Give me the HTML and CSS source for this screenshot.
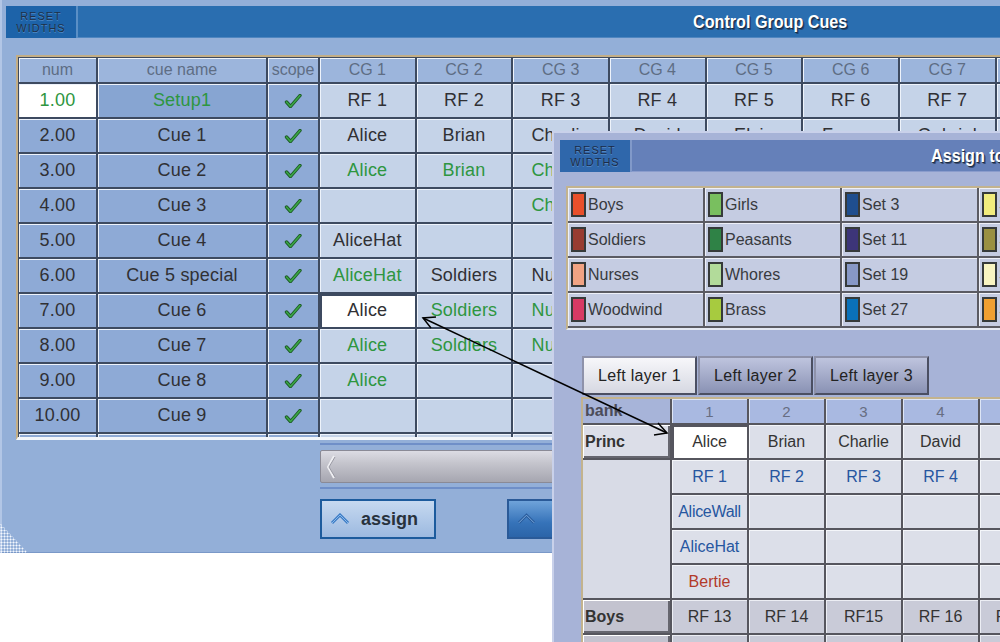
FILE: index.html
```html
<!DOCTYPE html>
<html>
<head>
<meta charset="utf-8">
<link rel="stylesheet" href="styles.css">
</head>
<body>
<div class="desk">
  <section class="win main">
    <header class="titlebar">
      <div class="reset">RESET<br>WIDTHS</div>
      <div class="title"><span>Control Group Cues</span></div>
    </header>
    <div class="cuewrap">
      <div class="cues">
        <div class="c h">num</div><div class="c h">cue name</div><div class="c h">scope</div>
        <div class="c h">CG 1</div><div class="c h">CG 2</div><div class="c h">CG 3</div><div class="c h">CG 4</div><div class="c h">CG 5</div><div class="c h">CG 6</div><div class="c h">CG 7</div><div class="c h">CG 8</div>

        <div class="c w g">1.00</div><div class="c b g dk">Setup1</div><div class="c b ck"><svg width="18" height="14" viewBox="0 0 18 14"><path d="M2.5 8 L6.5 12.5 L16 1.5" fill="none" stroke="#1d5a26" stroke-width="3.4" stroke-linecap="round" stroke-linejoin="round"/><path d="M2.5 8 L6.5 12.5 L16 1.5" fill="none" stroke="#3aa746" stroke-width="1.6" stroke-linecap="round" stroke-linejoin="round"/></svg></div>
        <div class="c l">RF 1</div><div class="c l">RF 2</div><div class="c l">RF 3</div><div class="c l">RF 4</div><div class="c l">RF 5</div><div class="c l">RF 6</div><div class="c l">RF 7</div><div class="c l">RF 8</div>

        <div class="c b">2.00</div><div class="c b">Cue 1</div><div class="c b ck"><svg width="18" height="14" viewBox="0 0 18 14"><path d="M2.5 8 L6.5 12.5 L16 1.5" fill="none" stroke="#1d5a26" stroke-width="3.4" stroke-linecap="round" stroke-linejoin="round"/><path d="M2.5 8 L6.5 12.5 L16 1.5" fill="none" stroke="#3aa746" stroke-width="1.6" stroke-linecap="round" stroke-linejoin="round"/></svg></div>
        <div class="c l">Alice</div><div class="c l">Brian</div><div class="c l">Charlie</div><div class="c l">David</div><div class="c l">Elsie</div><div class="c l">Fergus</div><div class="c l">Gabriel</div><div class="c l">Harry</div>

        <div class="c b">3.00</div><div class="c b">Cue 2</div><div class="c b ck"><svg width="18" height="14" viewBox="0 0 18 14"><path d="M2.5 8 L6.5 12.5 L16 1.5" fill="none" stroke="#1d5a26" stroke-width="3.4" stroke-linecap="round" stroke-linejoin="round"/><path d="M2.5 8 L6.5 12.5 L16 1.5" fill="none" stroke="#3aa746" stroke-width="1.6" stroke-linecap="round" stroke-linejoin="round"/></svg></div>
        <div class="c l g">Alice</div><div class="c l g">Brian</div><div class="c l g">Charlie</div><div class="c l"></div><div class="c l"></div><div class="c l"></div><div class="c l"></div><div class="c l"></div>

        <div class="c b">4.00</div><div class="c b">Cue 3</div><div class="c b ck"><svg width="18" height="14" viewBox="0 0 18 14"><path d="M2.5 8 L6.5 12.5 L16 1.5" fill="none" stroke="#1d5a26" stroke-width="3.4" stroke-linecap="round" stroke-linejoin="round"/><path d="M2.5 8 L6.5 12.5 L16 1.5" fill="none" stroke="#3aa746" stroke-width="1.6" stroke-linecap="round" stroke-linejoin="round"/></svg></div>
        <div class="c l"></div><div class="c l"></div><div class="c l g">Charlie</div><div class="c l"></div><div class="c l"></div><div class="c l"></div><div class="c l"></div><div class="c l"></div>

        <div class="c b">5.00</div><div class="c b">Cue 4</div><div class="c b ck"><svg width="18" height="14" viewBox="0 0 18 14"><path d="M2.5 8 L6.5 12.5 L16 1.5" fill="none" stroke="#1d5a26" stroke-width="3.4" stroke-linecap="round" stroke-linejoin="round"/><path d="M2.5 8 L6.5 12.5 L16 1.5" fill="none" stroke="#3aa746" stroke-width="1.6" stroke-linecap="round" stroke-linejoin="round"/></svg></div>
        <div class="c l">AliceHat</div><div class="c l"></div><div class="c l"></div><div class="c l"></div><div class="c l"></div><div class="c l"></div><div class="c l"></div><div class="c l"></div>

        <div class="c b">6.00</div><div class="c b">Cue 5 special</div><div class="c b ck"><svg width="18" height="14" viewBox="0 0 18 14"><path d="M2.5 8 L6.5 12.5 L16 1.5" fill="none" stroke="#1d5a26" stroke-width="3.4" stroke-linecap="round" stroke-linejoin="round"/><path d="M2.5 8 L6.5 12.5 L16 1.5" fill="none" stroke="#3aa746" stroke-width="1.6" stroke-linecap="round" stroke-linejoin="round"/></svg></div>
        <div class="c l g">AliceHat</div><div class="c l">Soldiers</div><div class="c l">Nurses</div><div class="c l"></div><div class="c l"></div><div class="c l"></div><div class="c l"></div><div class="c l"></div>

        <div class="c b">7.00</div><div class="c b">Cue 6</div><div class="c b ck"><svg width="18" height="14" viewBox="0 0 18 14"><path d="M2.5 8 L6.5 12.5 L16 1.5" fill="none" stroke="#1d5a26" stroke-width="3.4" stroke-linecap="round" stroke-linejoin="round"/><path d="M2.5 8 L6.5 12.5 L16 1.5" fill="none" stroke="#3aa746" stroke-width="1.6" stroke-linecap="round" stroke-linejoin="round"/></svg></div>
        <div class="c sel">Alice</div><div class="c l g">Soldiers</div><div class="c l g">Nurses</div><div class="c l"></div><div class="c l"></div><div class="c l"></div><div class="c l"></div><div class="c l"></div>

        <div class="c b">8.00</div><div class="c b">Cue 7</div><div class="c b ck"><svg width="18" height="14" viewBox="0 0 18 14"><path d="M2.5 8 L6.5 12.5 L16 1.5" fill="none" stroke="#1d5a26" stroke-width="3.4" stroke-linecap="round" stroke-linejoin="round"/><path d="M2.5 8 L6.5 12.5 L16 1.5" fill="none" stroke="#3aa746" stroke-width="1.6" stroke-linecap="round" stroke-linejoin="round"/></svg></div>
        <div class="c l g">Alice</div><div class="c l g">Soldiers</div><div class="c l g">Nurses</div><div class="c l"></div><div class="c l"></div><div class="c l"></div><div class="c l"></div><div class="c l"></div>

        <div class="c b">9.00</div><div class="c b">Cue 8</div><div class="c b ck"><svg width="18" height="14" viewBox="0 0 18 14"><path d="M2.5 8 L6.5 12.5 L16 1.5" fill="none" stroke="#1d5a26" stroke-width="3.4" stroke-linecap="round" stroke-linejoin="round"/><path d="M2.5 8 L6.5 12.5 L16 1.5" fill="none" stroke="#3aa746" stroke-width="1.6" stroke-linecap="round" stroke-linejoin="round"/></svg></div>
        <div class="c l g">Alice</div><div class="c l"></div><div class="c l"></div><div class="c l"></div><div class="c l"></div><div class="c l"></div><div class="c l"></div><div class="c l"></div>

        <div class="c b">10.00</div><div class="c b">Cue 9</div><div class="c b ck"><svg width="18" height="14" viewBox="0 0 18 14"><path d="M2.5 8 L6.5 12.5 L16 1.5" fill="none" stroke="#1d5a26" stroke-width="3.4" stroke-linecap="round" stroke-linejoin="round"/><path d="M2.5 8 L6.5 12.5 L16 1.5" fill="none" stroke="#3aa746" stroke-width="1.6" stroke-linecap="round" stroke-linejoin="round"/></svg></div>
        <div class="c l"></div><div class="c l"></div><div class="c l"></div><div class="c l"></div><div class="c l"></div><div class="c l"></div><div class="c l"></div><div class="c l"></div>

        <div class="c b">11.00</div><div class="c b">Cue 10</div><div class="c b"></div>
        <div class="c l"></div><div class="c l"></div><div class="c l"></div><div class="c l"></div><div class="c l"></div><div class="c l"></div><div class="c l"></div><div class="c l"></div>
      </div>
    </div>
    <div class="scroller">
      <div class="track">
        <svg width="12" height="26" viewBox="0 0 12 26"><polyline points="9,2 3,13 9,24" fill="none" stroke="#eeeef2" stroke-width="2"/><polyline points="10,3 4,13 10,23" fill="none" stroke="#9a9aa4" stroke-width="1"/></svg>
      </div>
    </div>
    <div class="btnrow">
      <div class="btn"><svg width="20" height="12" viewBox="0 0 20 12"><polyline points="2,10 10,2 18,10" fill="none" stroke="#3b7cc6" stroke-width="3"/><polyline points="2,10 10,2 18,10" fill="none" stroke="#8ab8e8" stroke-width="1"/></svg><span>assign</span></div>
      <div class="btn dark"><svg width="20" height="12" viewBox="0 0 20 12"><polyline points="2,10 10,2 18,10" fill="none" stroke="#2a5c9c" stroke-width="3"/><polyline points="2,10 10,2 18,10" fill="none" stroke="#7eaee0" stroke-width="1"/></svg><span>unassign</span></div>
    </div>
    <div class="grip"></div>
  </section>

  <section class="win assignwin">
    <header class="titlebar t2">
      <div class="reset r2">RESET<br>WIDTHS</div>
      <div class="title title2"><span>Assign to Control Group</span></div>
    </header>
    <div class="colwrap">
      <div class="colors">
        <div class="cc"><i style="background:#e9502b"></i>Boys</div>
        <div class="cc"><i style="background:#79bf5f"></i>Girls</div>
        <div class="cc"><i style="background:#1f4e8e"></i>Set 3</div>
        <div class="cc"><i style="background:#f1ec7e"></i>Set 4</div>
        <div class="cc"><i style="background:#983c30"></i>Soldiers</div>
        <div class="cc"><i style="background:#2f8246"></i>Peasants</div>
        <div class="cc"><i style="background:#3d3579"></i>Set 11</div>
        <div class="cc"><i style="background:#9a9042"></i>Set 12</div>
        <div class="cc"><i style="background:#f1a383"></i>Nurses</div>
        <div class="cc"><i style="background:#b2db9a"></i>Whores</div>
        <div class="cc"><i style="background:#8798c6"></i>Set 19</div>
        <div class="cc"><i style="background:#f8f4c2"></i>Set 20</div>
        <div class="cc"><i style="background:#d83a64"></i>Woodwind</div>
        <div class="cc"><i style="background:#a7cb3f"></i>Brass</div>
        <div class="cc"><i style="background:#0a71b9"></i>Set 27</div>
        <div class="cc"><i style="background:#f0a033"></i>Set 28</div>
      </div>
    </div>
    <div class="tabs">
      <div class="tab on">Left layer 1</div>
      <div class="tab">Left layer 2</div>
      <div class="tab">Left layer 3</div>
    </div>
    <div class="bankwrap">
      <div class="bank">
        <div class="k hl">bank</div><div class="k hn">1</div><div class="k hn">2</div><div class="k hn">3</div><div class="k hn">4</div><div class="k hn">5</div>
        <div class="k lab">Princ</div><div class="k d sl">Alice</div><div class="k d">Brian</div><div class="k d">Charlie</div><div class="k d">David</div><div class="k d">Elsie</div>
        <div class="k merged"></div><div class="k d bl">RF 1</div><div class="k d bl">RF 2</div><div class="k d bl">RF 3</div><div class="k d bl">RF 4</div><div class="k d bl">RF 5</div>
        <div class="k d bl nar">AliceWall</div><div class="k d"></div><div class="k d"></div><div class="k d"></div><div class="k d"></div>
        <div class="k d bl">AliceHat</div><div class="k d"></div><div class="k d"></div><div class="k d"></div><div class="k d"></div>
        <div class="k d rd">Bertie</div><div class="k d"></div><div class="k d"></div><div class="k d"></div><div class="k d"></div>
        <div class="k lab grey">Boys</div><div class="k gd">RF 13</div><div class="k gd">RF 14</div><div class="k gd">RF15</div><div class="k gd">RF 16</div><div class="k gd">RF 17</div>
        <div class="k lab grey"></div><div class="k gd"></div><div class="k gd"></div><div class="k gd"></div><div class="k gd"></div><div class="k gd"></div>
      </div>
    </div>
  </section>

  <svg class="arrow" width="1000" height="642" viewBox="0 0 1000 642">
    <line x1="423" y1="318" x2="667" y2="433" stroke="#000" stroke-width="1.5"/>
    <polyline points="431,328 423,318 436,317" fill="none" stroke="#000" stroke-width="1.5"/>
    <polyline points="658,423 667,433 654,435" fill="none" stroke="#000" stroke-width="1.5"/>
  </svg>
</div>
</body>
</html>
```
FILE: styles.css
```css
* { box-sizing: border-box; margin: 0; padding: 0; }
body { margin: 0; background: #fff; font-family: "Liberation Sans", Arial, sans-serif; }

.desk { position: relative; width: 1000px; height: 642px; overflow: hidden; background: #fff; }
.win { position: absolute; }

/* main window */
.main {
  left: 0; top: 0; width: 1600px; height: 553px;
  background: #93afd8;
  padding-top: 6px;
  box-shadow: inset 2px 0 0 #b2c6e6, inset 0 -1px 0 #7a98c8;
}
.titlebar { display: flex; height: 32px; margin-left: 6px; background: #2a6eb0; box-shadow: inset 0 -1px 0 #4f86c0; }
.reset {
  width: 72px; flex: none;
  background: #1d63a9;
  border-right: 2px solid #5a8fc6;
  color: #1f3148; font-size: 11px; line-height: 12px; letter-spacing: 1px;
  text-align: center; padding-top: 4px;
  text-shadow: 0 1px 0 rgba(120,170,220,.5);
}
.title { flex: 1; padding-left: 615px; display: flex; align-items: center; }
.title span {
  display: inline-block; white-space: nowrap;
  color: #fff; font-weight: bold; font-size: 19px;
  transform: scaleX(.85); transform-origin: left center;
  text-shadow: 1px 1px 0 #1b2c44, 2px 2px 0 rgba(20,30,50,.5);
}

.cuewrap {
  margin: 17px 0 0 16px;
  height: 385px; overflow: hidden;
  border-top: 2px solid #c3ae86; border-left: 2px solid #c3ae86;
  border-bottom: 3px solid #f2f5fa;
}
.cues {
  display: grid;
  grid-template-columns: 77px 168px 50px repeat(8, 94.67px);
  grid-template-rows: 24px;
  grid-auto-rows: 33px;
  gap: 2px;
  padding: 1px 0 0 1px;
  width: max-content;
  background: #3d4a60;
}
.c {
  display: flex; align-items: center; justify-content: center;
  white-space: nowrap; overflow: hidden;
  font-size: 18px; letter-spacing: .2px; color: #303034;
  box-shadow: inset 1px 1px 0 #eef3fb;
}
.c.h { background: #9cb5dc; font-size: 16px; color: #5e6d84; letter-spacing: 0; }
.c.b { background: #8eaad6; }
.c.b.dk { background: #87a5d2; }
.c.l { background: #c5d3e8; }
.c.w { background: #fff; }
.c.g { color: #2e9640; }
.c.sel { background: #fff; box-shadow: inset 2px 2px 0 #3d4a60; }
.c.ck svg { display: block; }

.scroller {
  margin: 3px 0 0 320px;
  border-top: 2px solid #6f8fc8; border-bottom: 2px solid #6f8fc8;
  padding: 5px 0 4px;
}
.track {
  height: 33px;
  border: 1px solid #8a8a96; border-radius: 2px;
  background: linear-gradient(#dcdce4, #c4c4cc 40%, #a6a6b0);
  display: flex; align-items: center; padding-left: 4px;
}
.btnrow { display: flex; gap: 71px; margin: 10px 0 0 320px; }
.btn {
  width: 116px; height: 40px;
  border: 2px solid #1c5b9d;
  background: linear-gradient(#c6d9f0, #9cb9e0);
  display: flex; align-items: center; padding-left: 8px; gap: 11px;
  font-size: 18px; font-weight: bold; color: #28323c;
  white-space: nowrap;
}
.btn.dark { width: 140px; gap: 30px; border-color: #2a5a98; background: linear-gradient(#6fa3da, #3673b9 60%, #2b64a8); color: #1a3a66; }
.grip {
  position: absolute; left: 0; bottom: 0; width: 28px; height: 30px;
  background-image: radial-gradient(circle, #f4f8ff 0.9px, transparent 1.1px);
  background-size: 3px 3px;
  clip-path: polygon(0 0, 0 100%, 100% 100%);
}

/* assign window */
.assignwin {
  left: 552px; top: 131px; width: 600px; height: 600px;
  background: #a7b3d7;
  border-left: 2px solid #c9d1ea; border-top: 2px solid #c9d1ea;
  padding: 7px 0 0 6px;
}
.t2 { margin-left: 0; background: #6580b9; box-shadow: inset 0 -1px 0 #8a9ccc; }
.r2 { background: #2f67ab; border-right-color: #8199c9; color: #1d2c48; }
.title2 { padding-left: 299px; }

.colwrap {
  margin: 14px 0 0 6px;
  border-top: 2px solid #c3b38e; border-left: 2px solid #c3b38e;
  border-bottom: 2px solid #e4e8f2;
}
.colors {
  display: grid;
  grid-template-columns: repeat(4, 135px);
  grid-auto-rows: 33px;
  gap: 2px; padding-bottom: 2px;
  width: max-content;
  background: #5b5b63;
}
.cc {
  display: flex; align-items: center;
  background: #c5cce2; box-shadow: inset 1px 1px 0 #eef0f8;
  font-size: 16px; color: #383a3e; white-space: nowrap;
}
.cc i { display: block; width: 15px; height: 25px; border: 2px solid #363a3a; margin: 0 2px 0 3px; }

.tabs { display: flex; margin: 26px 0 0 22px; }
.tab {
  width: 115px; height: 39px;
  border: 2px solid; border-color: #8e92aa #4b4f62 #4b4f62 #8e92aa;
  background: linear-gradient(#bec4de, #8a92b4);
  display: flex; align-items: center; justify-content: center;
  font-size: 16px; color: #222; letter-spacing: .3px;
}
.tab.on { background: linear-gradient(#f7f7fa, #d6d8e2); }
.tab + .tab { margin-left: 1px; }

.bankwrap {
  margin: 2px 0 0 21px;
  border-top: 2px solid #c3b38e; border-left: 2px solid #c3b38e;
}
.bank {
  display: grid;
  grid-template-columns: 87px repeat(5, 75px);
  grid-template-rows: 24px;
  grid-auto-rows: 33px;
  gap: 2px;
  width: max-content;
  background: #56565e;
}
.k {
  display: flex; align-items: center; justify-content: center;
  font-size: 16px; color: #333; white-space: nowrap; overflow: hidden;
}
.k.hl { background: #a7b4d9; justify-content: flex-start; padding-left: 2px; font-weight: bold; color: #4c4c5a; }
.k.hn { background: #a9b9e1; color: #676d82; font-size: 15px; box-shadow: inset 1px 1px 0 #dde5f5; }
.k.lab {
  background: #dcdee8; justify-content: flex-start; padding-left: 2px; font-weight: bold; color: #333;
  box-shadow: inset 1px 1px 0 #fff, inset -2px -2px 0 #66666f;
}
.k.lab.grey { background: #c3c3cf; }
.k.merged { grid-row: span 4; background: #d8dbe6; }
.k.d { background: #dcdfe9; box-shadow: inset 1px 1px 0 #f4f6fa; }
.k.d.sl { background: #fff; box-shadow: inset 2px 2px 0 #55555e; }
.k.bl { color: #2656a0; }
.k.nar { letter-spacing: -.3px; }
.k.rd { color: #b23a2a; }
.k.gd { background: #c9cbd8; box-shadow: inset 1px 1px 0 #eceef4; }

.arrow { position: absolute; left: 0; top: 0; pointer-events: none; }
```
